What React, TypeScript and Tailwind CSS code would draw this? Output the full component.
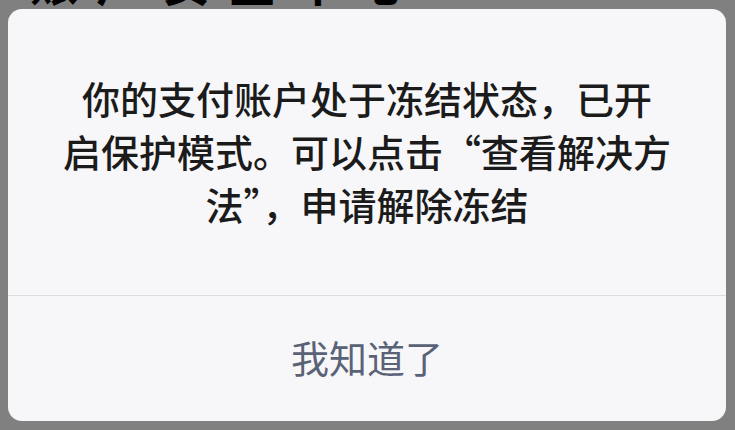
const cjk = { fontFamily: '"Noto Sans CJK SC", "Noto Sans", sans-serif' };

// 冻结提示弹窗：遮罩层 + 居中对话框
export default function App() {
  return (
    <div className="relative w-[735px] h-[430px] overflow-hidden bg-[#808080]" style={cjk}>
      {/* 被遮罩的页面标题，只露出底部 */}
      <div className="absolute left-[30px] top-[-44px] text-[48px] leading-[48px] font-bold text-black tracking-[18px]">
        账户安全中心
      </div>

      <div className="relative pt-[9px] px-[8px]">
        <div className="w-[718px] h-[412px] rounded-[14px] bg-[#f7f7f9] flex flex-col overflow-hidden">
          <div className="flex-1 flex items-center justify-center border-b border-[#dcdcdf]">
            <p className="text-center text-[38px] leading-[53px] text-[#1b1b1b] font-medium whitespace-nowrap -mt-[3px]">
              你的支付账户处于冻结状态，已开
              <br />
              启保护模式。可以点击“查看解决方
              <br />
              法”，申请解除冻结
            </p>
          </div>
          <button className="h-[125px] pb-[4px] flex items-center justify-center text-[38px] text-[#5a6277]">
            我知道了
          </button>
        </div>
      </div>
    </div>
  );
}
